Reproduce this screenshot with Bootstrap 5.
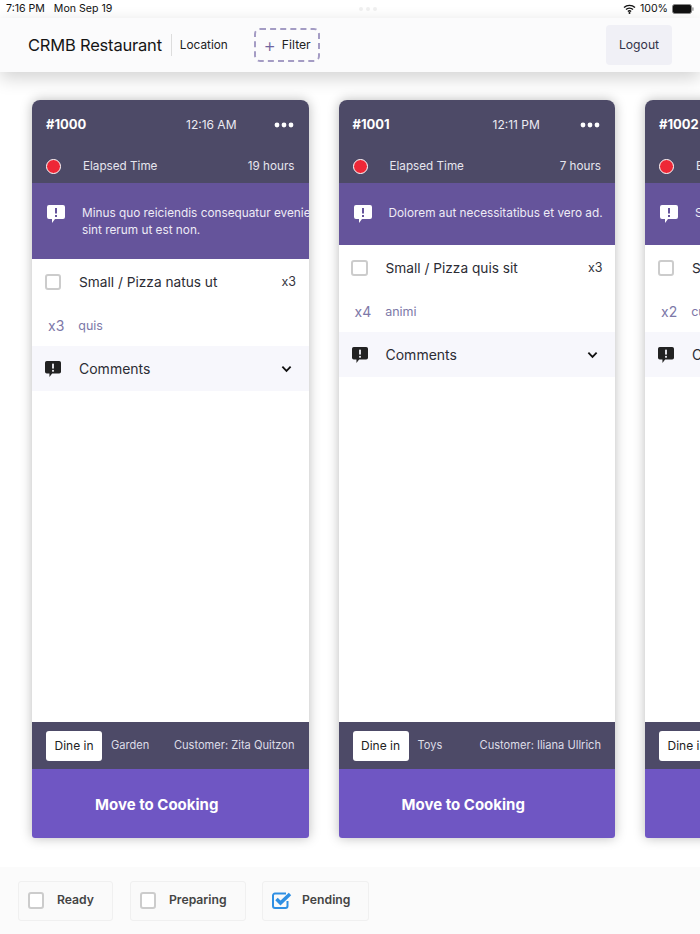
<!DOCTYPE html>
<html lang="en">
<head>
    <meta charset="UTF-8">
    <meta name="viewport" content="width=device-width, initial-scale=1.0">
    <title>CRMB Restaurant</title>
    <link href="https://cdn.jsdelivr.net/npm/bootstrap@5.3.0/dist/css/bootstrap.min.css" rel="stylesheet">
    <style>
        html, body { height: 934px; overflow: hidden; }
        body { font-family: Inter, "Liberation Sans", sans-serif; background: #fff; color: #1f1f2b; }
        .screen { height: 934px; overflow: hidden; }
        .status-bar { height: 18px; padding: 0 6px; font-size: 10.6px; color: #111; background: #fff; }
        .grab-dots { gap: 3px; }
        .grab-dots i { width: 4px; height: 4px; border-radius: 50%; background: #f0f0f0; display: block; }
        .top-bar { height: 54px; padding: 0 28px; background: #fbfbfc; box-shadow: 0 6px 18px rgba(0,0,0,.18); position: relative; z-index: 2; }
        .brand { font-size: 16.5px; color: #151515; padding-right: 9px; border-right: 1px solid #ddd; line-height: 22px; letter-spacing: -.2px; }
        .loc { font-size: 11.8px; margin-left: 8px; padding-top: 1px; color: #222; }
        .filter-btn { margin-left: 26px; width: 66.5px; height: 34px; padding-top: 1px; border: 2px dashed #a49cc4; border-radius: 6px; font-size: 12.2px; color: #222; }
        .filter-btn span { color: #6f64a0; font-size: 19px; line-height: 1; margin-right: 6px; font-weight: 300; }
        .logout-btn { width: 66px; height: 40px; background: #f0f0f6; border: 0; border-radius: 4px; font-size: 12.2px; color: #33334a; padding: 1px 0 0; }
        .board { padding: 28px 0 29px 32px; gap: 30px; overflow: hidden; min-height: 0; }
        .order { width: 276.5px; flex: 0 0 276.5px; background: #fff; border-radius: 8px 8px 3px 3px; box-shadow: 0 0 12px rgba(0,0,0,.27); overflow: hidden; }
        .order-head { background: #4d4a67; color: #fff; padding: 0 14px; }
        .head-top { height: 48px; padding-top: 1px; }
        .order-no { width: 140px; font-size: 13px; font-weight: 700; }
        .order-time { font-size: 12px; color: #ecebf2; }
        .head-top svg { margin-right: 1px; }
        .head-time { height: 35px; padding-top: 1px; font-size: 11.7px; color: #e6e5ee; }
        .head-time .elapsed { padding-top: 1px; }
        .red-dot { width: 15px; height: 15px; border-radius: 50%; background: #ee2737; border: 1px solid #fff; margin-right: 22px; }
        .order-note { background: #65549b; color: #eeebf6; font-size: 11.8px; line-height: 17px; padding: 22px 0 0 14px; white-space: nowrap; overflow: hidden; }
        .order-note svg { flex: 0 0 auto; margin: 0 17px 0 1px; }
        .note-tall { height: 76px; }
        .note-short { height: 62px; }
        .item-row { height: 46px; padding: 0 12.5px; font-size: 13.7px; color: #2c2c34; }
        .tick { width: 16.5px; height: 16.5px; border: 2px solid #ccc; border-radius: 3px; background: #fff; flex: 0 0 auto; margin-right: 18px; display: block; }
        .item-qty { font-size: 12.5px; color: #33333d; }
        .sub-row { height: 41px; padding: 0 14px 0 16px; color: #7d78a8; }
        .sub-qty { font-size: 14px; margin-right: 14px; }
        .sub-name { font-size: 12.5px; margin-top: 1px; }
        .comments-row { height: 45px; padding: 0 17px 0 13px; background: #f7f7fc; font-size: 14px; color: #2c2c34; }
        .comments-row svg.bubble { margin-right: 18px; }
        .order-info { height: 47px; background: #4d4a67; padding: 0 14px; color: #dedde7; font-size: 11.1px; }
        .dine-tag { width: 56px; height: 30px; background: #fff; color: #222; border-radius: 3px; font-size: 12px; margin-right: 9px; }
        .move-btn { height: 69px; background: #6f56c3; color: #fff; border: 0; border-radius: 0; font-size: 15px; font-weight: 700; padding: 3px 27px 0 0; }
        .status-foot { height: 67px; background: #fbfbfb; padding: 0 17.5px; gap: 16.5px; }
        .status-chip { height: 40px; background: #fafafa; border: 1px solid #f0f0f0; border-radius: 3px; padding: 0 18px 0 9px; font-size: 12.2px; font-weight: 600; color: #444; }
        .status-chip .tick { margin-right: 13px; }
        .status-chip svg { margin-right: 10px; }
    </style>
</head>
<body>
    <div class="screen d-flex flex-column">
        <div class="status-bar d-flex align-items-center justify-content-between">
            <div>7:16 PM &nbsp;&nbsp;Mon Sep 19</div>
            <div class="grab-dots d-flex"><i></i><i></i><i></i></div>
            <div class="d-flex align-items-center gap-1">
                <svg width="13" height="10" viewBox="0 0 13 10"><path d="M1 3.6a8 8 0 0 1 11 0M3 5.600a5.200 5.200 0 0 1 7 0M4.900 7.400a2.400 2.400 0 0 1 3.200 0" fill="none" stroke="#111" stroke-width="1.400"/><circle cx="6.500" cy="8.900" r="1" fill="#111"/></svg>
                <span>100%</span>
                <svg width="22" height="10" viewBox="0 0 22 10"><rect x=".5" y=".5" width="19" height="9" rx="2.200" fill="#111" stroke="#888"/><rect x="20.300" y="3.200" width="1.200" height="3.600" rx=".6" fill="#888"/></svg>
            </div>
        </div>

        <div class="top-bar d-flex align-items-center">
            <div class="brand">CRMB Restaurant</div>
            <div class="loc">Location</div>
            <div class="filter-btn d-flex align-items-center justify-content-center"><span>+</span>Filter</div>
            <button class="logout-btn btn ms-auto">Logout</button>
        </div>

        <div class="board d-flex flex-grow-1">
            <div class="order d-flex flex-column">
                <div class="order-head">
                    <div class="head-top d-flex align-items-center">
                        <span class="order-no">#1000</span>
                        <span class="order-time">12:16 AM</span>
                        <svg class="ms-auto" width="20" height="6" viewBox="0 0 20 6"><circle cx="3" cy="3" r="2.400" fill="#fff"/><circle cx="10" cy="3" r="2.400" fill="#fff"/><circle cx="17" cy="3" r="2.400" fill="#fff"/></svg>
                    </div>
                    <div class="head-time d-flex align-items-center">
                        <span class="red-dot"></span>
                        <span class="elapsed">Elapsed Time</span>
                        <span class="elapsed ms-auto">19 hours</span>
                    </div>
                </div>
                <div class="order-note note-tall d-flex align-items-start">
                    <svg width="18" height="18" viewBox="0 0 18 18"><path d="M2 0h14a2 2 0 0 1 2 2v10a2 2 0 0 1-2 2H8l-3 4v-4H2a2 2 0 0 1-2-2V2a2 2 0 0 1 2-2z" fill="#fff"/><rect x="8" y="3" width="2" height="5.500" fill="#65549b"/><rect x="8" y="10" width="2" height="2" fill="#65549b"/></svg>
                    <div>Minus quo reiciendis consequatur eveniet<br>sint rerum ut est non.</div>
                </div>
                <div class="item-row d-flex align-items-center">
                    <span class="tick"></span>
                    <span>Small / Pizza natus ut</span>
                    <span class="item-qty ms-auto">x3</span>
                </div>
                <div class="sub-row d-flex align-items-center">
                    <span class="sub-qty">x3</span>
                    <span class="sub-name">quis</span>
                </div>
                <div class="comments-row d-flex align-items-center">
                    <svg class="bubble" width="16" height="16" viewBox="0 0 18 18"><path d="M2 0h14a2 2 0 0 1 2 2v10a2 2 0 0 1-2 2H8l-3 4v-4H2a2 2 0 0 1-2-2V2a2 2 0 0 1 2-2z" fill="#222"/><rect x="8" y="3" width="2" height="5.500" fill="#f7f7fc"/><rect x="8" y="10" width="2" height="2" fill="#f7f7fc"/></svg>
                    <span>Comments</span>
                    <svg class="ms-auto" width="11" height="8" viewBox="0 0 12 8"><path d="M1.500 1.500 6 6l4.500-4.500" fill="none" stroke="#111" stroke-width="2"/></svg>
                </div>
                <div class="flex-grow-1"></div>
                <div class="order-info d-flex align-items-center">
                    <span class="dine-tag d-flex align-items-center justify-content-center">Dine in</span>
                    <span>Garden</span>
                    <span class="ms-auto">Customer: Zita Quitzon</span>
                </div>
                <button class="move-btn btn">Move to Cooking</button>
            </div>

            <div class="order d-flex flex-column">
                <div class="order-head">
                    <div class="head-top d-flex align-items-center">
                        <span class="order-no">#1001</span>
                        <span class="order-time">12:11 PM</span>
                        <svg class="ms-auto" width="20" height="6" viewBox="0 0 20 6"><circle cx="3" cy="3" r="2.400" fill="#fff"/><circle cx="10" cy="3" r="2.400" fill="#fff"/><circle cx="17" cy="3" r="2.400" fill="#fff"/></svg>
                    </div>
                    <div class="head-time d-flex align-items-center">
                        <span class="red-dot"></span>
                        <span class="elapsed">Elapsed Time</span>
                        <span class="elapsed ms-auto">7 hours</span>
                    </div>
                </div>
                <div class="order-note note-short d-flex align-items-start">
                    <svg width="18" height="18" viewBox="0 0 18 18"><path d="M2 0h14a2 2 0 0 1 2 2v10a2 2 0 0 1-2 2H8l-3 4v-4H2a2 2 0 0 1-2-2V2a2 2 0 0 1 2-2z" fill="#fff"/><rect x="8" y="3" width="2" height="5.500" fill="#65549b"/><rect x="8" y="10" width="2" height="2" fill="#65549b"/></svg>
                    <div>Dolorem aut necessitatibus et vero ad.</div>
                </div>
                <div class="item-row d-flex align-items-center">
                    <span class="tick"></span>
                    <span>Small / Pizza quis sit</span>
                    <span class="item-qty ms-auto">x3</span>
                </div>
                <div class="sub-row d-flex align-items-center">
                    <span class="sub-qty">x4</span>
                    <span class="sub-name">animi</span>
                </div>
                <div class="comments-row d-flex align-items-center">
                    <svg class="bubble" width="16" height="16" viewBox="0 0 18 18"><path d="M2 0h14a2 2 0 0 1 2 2v10a2 2 0 0 1-2 2H8l-3 4v-4H2a2 2 0 0 1-2-2V2a2 2 0 0 1 2-2z" fill="#222"/><rect x="8" y="3" width="2" height="5.500" fill="#f7f7fc"/><rect x="8" y="10" width="2" height="2" fill="#f7f7fc"/></svg>
                    <span>Comments</span>
                    <svg class="ms-auto" width="11" height="8" viewBox="0 0 12 8"><path d="M1.500 1.500 6 6l4.500-4.500" fill="none" stroke="#111" stroke-width="2"/></svg>
                </div>
                <div class="flex-grow-1"></div>
                <div class="order-info d-flex align-items-center">
                    <span class="dine-tag d-flex align-items-center justify-content-center">Dine in</span>
                    <span>Toys</span>
                    <span class="ms-auto">Customer: Iliana Ullrich</span>
                </div>
                <button class="move-btn btn">Move to Cooking</button>
            </div>

            <div class="order d-flex flex-column">
                <div class="order-head">
                    <div class="head-top d-flex align-items-center">
                        <span class="order-no">#1002</span>
                        <span class="order-time">12:05 PM</span>
                        <svg class="ms-auto" width="20" height="6" viewBox="0 0 20 6"><circle cx="3" cy="3" r="2.400" fill="#fff"/><circle cx="10" cy="3" r="2.400" fill="#fff"/><circle cx="17" cy="3" r="2.400" fill="#fff"/></svg>
                    </div>
                    <div class="head-time d-flex align-items-center">
                        <span class="red-dot"></span>
                        <span class="elapsed">Elapsed Time</span>
                        <span class="elapsed ms-auto">7 hours</span>
                    </div>
                </div>
                <div class="order-note note-short d-flex align-items-start">
                    <svg width="18" height="18" viewBox="0 0 18 18"><path d="M2 0h14a2 2 0 0 1 2 2v10a2 2 0 0 1-2 2H8l-3 4v-4H2a2 2 0 0 1-2-2V2a2 2 0 0 1 2-2z" fill="#fff"/><rect x="8" y="3" width="2" height="5.500" fill="#65549b"/><rect x="8" y="10" width="2" height="2" fill="#65549b"/></svg>
                    <div>Sed quia est et vero.</div>
                </div>
                <div class="item-row d-flex align-items-center">
                    <span class="tick"></span>
                    <span>Small / Pizza</span>
                    <span class="item-qty ms-auto">x2</span>
                </div>
                <div class="sub-row d-flex align-items-center">
                    <span class="sub-qty">x2</span>
                    <span class="sub-name">cum</span>
                </div>
                <div class="comments-row d-flex align-items-center">
                    <svg class="bubble" width="16" height="16" viewBox="0 0 18 18"><path d="M2 0h14a2 2 0 0 1 2 2v10a2 2 0 0 1-2 2H8l-3 4v-4H2a2 2 0 0 1-2-2V2a2 2 0 0 1 2-2z" fill="#222"/><rect x="8" y="3" width="2" height="5.500" fill="#f7f7fc"/><rect x="8" y="10" width="2" height="2" fill="#f7f7fc"/></svg>
                    <span>Comments</span>
                </div>
                <div class="flex-grow-1"></div>
                <div class="order-info d-flex align-items-center">
                    <span class="dine-tag d-flex align-items-center justify-content-center">Dine in</span>
                </div>
                <button class="move-btn btn">Move to Cooking</button>
            </div>
        </div>

        <div class="status-foot d-flex align-items-center flex-shrink-0">
            <div class="status-chip d-flex align-items-center"><span class="tick"></span>Ready</div>
            <div class="status-chip d-flex align-items-center"><span class="tick"></span>Preparing</div>
            <div class="status-chip d-flex align-items-center">
                <svg width="20" height="17" viewBox="0 0 20 17"><path d="M14 1.500H3a2 2 0 0 0-2 2V14a2 2 0 0 0 2 2h10.500a2 2 0 0 0 2-2V9" fill="none" stroke="#2f8fe3" stroke-width="2"/><path d="m4.500 7 4 4L18 2" fill="none" stroke="#2f8fe3" stroke-width="3.500"/></svg>
                Pending
            </div>
        </div>
    </div>

    <script src="https://cdn.jsdelivr.net/npm/bootstrap@5.3.0/dist/js/bootstrap.bundle.min.js"></script>
</body>
</html>
